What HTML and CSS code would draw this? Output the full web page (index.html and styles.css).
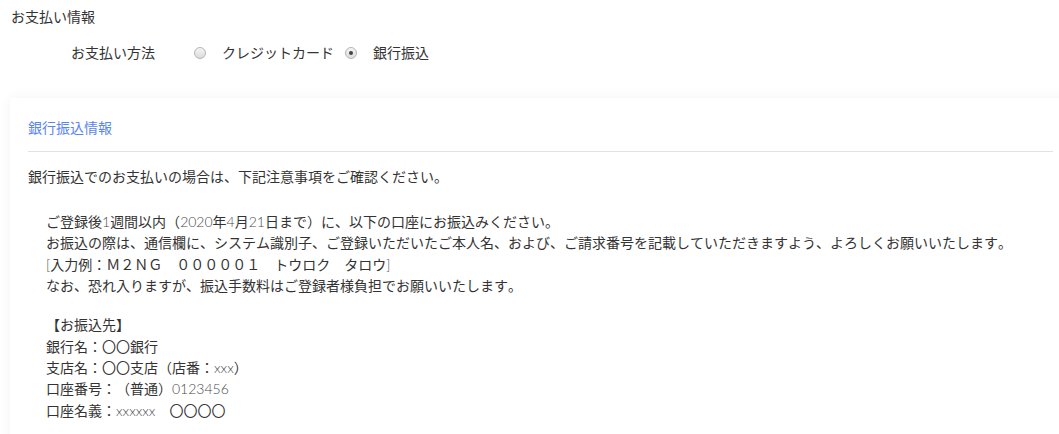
FILE: index.html
```html
<!DOCTYPE html>
<html lang="ja">
<head>
<meta charset="utf-8">
<link rel="stylesheet" href="styles.css">
</head>
<body>
<div class="page">
  <div class="section-title">お支払い情報</div>
  <div class="method-row">
    <div class="method-label">お支払い方法</div>
    <label class="opt"><span class="radio"></span><span class="opt-text">クレジットカード</span></label>
    <label class="opt"><span class="radio checked"></span><span class="opt-text">銀行振込</span></label>
  </div>
  <div class="card">
    <div class="card-title">銀行振込情報</div>
    <p class="lead">銀行振込でのお支払いの場合は、下記注意事項をご確認ください。</p>
    <div class="block">
      <div>ご登録後<span class="lt">1</span>週間以内（<span class="lt">2020</span>年<span class="lt">4</span>月<span class="lt">21</span>日まで）に、以下の口座にお振込みください。</div>
      <div>お振込の際は、通信欄に、システム識別子、ご登録いただいたご本人名、および、ご請求番号を記載していただきますよう、よろしくお願いいたします。</div>
      <div><span class="lt">[</span>入力例：Ｍ２ＮＧ　０００００１　トウロク　タロウ<span class="lt">]</span></div>
      <div>なお、恐れ入りますが、振込手数料はご登録者様負担でお願いいたします。</div>
    </div>
    <div class="block second">
      <div>【お振込先】</div>
      <div>銀行名：〇〇銀行</div>
      <div>支店名：〇〇支店（店番：<span class="lt">xxx</span>）</div>
      <div>口座番号：（普通）<span class="lt">0123456</span></div>
      <div>口座名義：<span class="lt">xxxxxx</span>　〇〇〇〇</div>
    </div>
  </div>
</div>
</body>
</html>
```

FILE: styles.css
```css
html, body {
  margin: 0;
  padding: 0;
  background: #ffffff;
  overflow: hidden;
}
body {
  font-family: "Lato", "Noto Sans CJK JP", sans-serif;
  font-size: 14px;
  line-height: 21.3px;
  color: #333333;
  text-spacing-trim: space-all;
  font-kerning: none;
}
.lt {
  font-weight: 300;
  color: #4a4a4a;
}
.page {
  padding: 6px 0 0 0;
}
.section-title {
  padding-left: 11px;
}
.method-row {
  display: flex;
  align-items: center;
  margin-top: 15px;
  padding-left: 71px;
}
.method-label {
  width: 123px;
}
.opt {
  display: flex;
  align-items: center;
  margin-right: 11px;
}
.radio {
  box-sizing: border-box;
  width: 12px;
  height: 12px;
  border-radius: 50%;
  border: 1px solid #b5b5b5;
  background: linear-gradient(#f4f4f4, #dcdcdc);
  display: flex;
  align-items: center;
  justify-content: center;
  margin-right: 16px;
}
.radio.checked::after {
  content: "";
  width: 4px;
  height: 4px;
  border-radius: 50%;
  background: #444444;
}
.card {
  margin: 34px -12px 0 10px;
  padding: 19px 18px 0 18px;
  background: #ffffff;
  box-shadow: 0 0 12px rgba(0, 0, 0, 0.05);
  height: 360px;
}
.card-title {
  color: #5b86ee;
  padding-bottom: 13px;
  border-bottom: 1px solid #e2e2e2;
}
.lead {
  margin: 14px 0 0 0;
}
.block {
  margin-top: 24px;
  padding-left: 18px;
}
.block.second {
  margin-top: 18px;
}
```
